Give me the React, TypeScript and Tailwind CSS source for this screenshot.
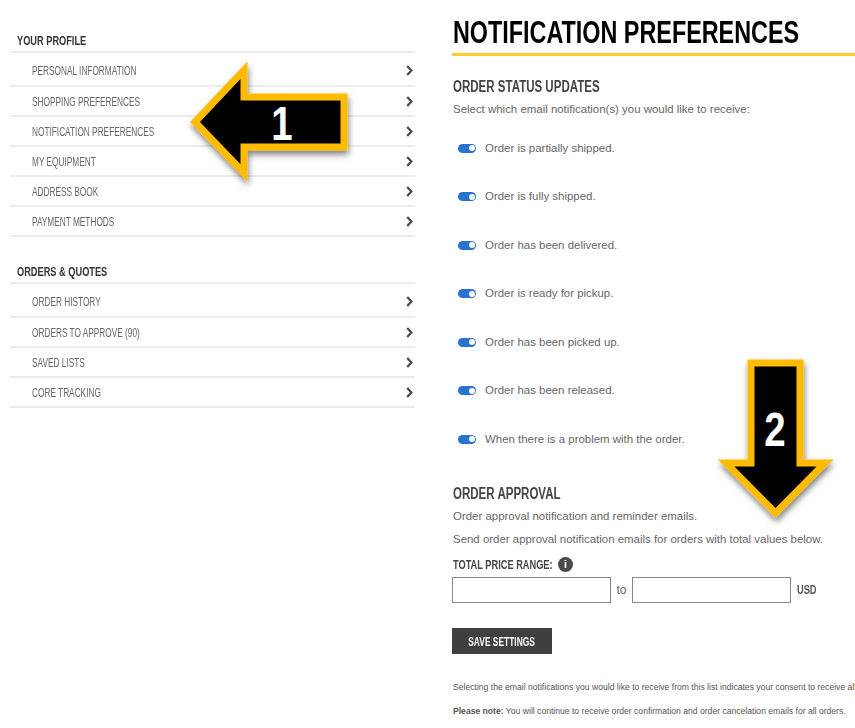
const profileLinks = [
  "PERSONAL INFORMATION",
  "SHOPPING PREFERENCES",
  "NOTIFICATION PREFERENCES",
  "MY EQUIPMENT",
  "ADDRESS BOOK",
  "PAYMENT METHODS",
];

const orderLinks = ["ORDER HISTORY", "ORDERS TO APPROVE (90)", "SAVED LISTS", "CORE TRACKING"];

const statusOptions = [
  "Order is partially shipped.",
  "Order is fully shipped.",
  "Order has been delivered.",
  "Order is ready for pickup.",
  "Order has been picked up.",
  "Order has been released.",
  "When there is a problem with the order.",
];

function Chevron() {
  return (
    <svg width="7" height="11" viewBox="0 0 7 11" fill="none" className="mr-[1px]">
      <path d="M1.2 1 L5.4 5.5 L1.2 10" stroke="#4a4a4a" strokeWidth="2.2" />
    </svg>
  );
}

function NavSection({ title, links }: { title: string; links: string[] }) {
  return (
    <section>
      <h2 className="h-[24px] pl-[7px] text-[13px] font-bold leading-[27px] text-[#333]">
        <span className="inline-block origin-left scale-x-[0.71] whitespace-nowrap">{title}</span>
      </h2>
      <ul className="border-t-2 border-[#ececec]">
        {links.map((link, i) => (
          <li
            key={link}
            className={`flex items-center justify-between border-b-2 border-[#ececec] pl-[22px] pr-[1px] ${
              i === 0 ? "h-[34px] pt-[3px]" : "h-[30px] pt-[1px]"
            }`}
          >
            <span className="inline-block origin-left scale-x-[0.69] whitespace-nowrap text-[12px] text-[#666]">
              {link}
            </span>
            <Chevron />
          </li>
        ))}
      </ul>
    </section>
  );
}

function Toggle() {
  return (
    <span className="flex h-[9px] w-[18px] items-center justify-end rounded-full bg-[#2872d0] pr-[1.5px]">
      <span className="h-[6px] w-[6px] rounded-full bg-white" />
    </span>
  );
}

function LeftArrow() {
  return (
    <svg className="absolute left-[180px] top-[52px]" width="180" height="140" viewBox="180 52 180 140">
      <defs>
        <filter id="shadow-left" x="-20%" y="-20%" width="140%" height="140%">
          <feDropShadow dx="1" dy="4" stdDeviation="3" floodColor="#000" floodOpacity="0.5" />
        </filter>
      </defs>
      <path
        d="M195 122 L244 70 L244 97 L344 97 L344 147 L244 147 L244 173 Z"
        fill="#000"
        stroke="#ffbb00"
        strokeWidth="7"
        strokeLinejoin="miter"
        filter="url(#shadow-left)"
      />
      <text
        transform="translate(282 140) scale(0.8 1)"
        textAnchor="middle"
        fontFamily="Liberation Sans, sans-serif"
        fontWeight="700"
        fontSize="48"
        fill="#fff"
      >
        1
      </text>
    </svg>
  );
}

function DownArrow() {
  return (
    <svg className="absolute left-[705px] top-[350px]" width="145" height="185" viewBox="705 350 145 185">
      <defs>
        <filter id="shadow-down" x="-20%" y="-20%" width="140%" height="140%">
          <feDropShadow dx="1" dy="4" stdDeviation="3" floodColor="#000" floodOpacity="0.5" />
        </filter>
      </defs>
      <path
        d="M751 363 L800 363 L800 463 L825 463 L775.5 513 L726 463 L751 463 Z"
        fill="#000"
        stroke="#ffbb00"
        strokeWidth="7"
        strokeLinejoin="miter"
        filter="url(#shadow-down)"
      />
      <text
        transform="translate(775 446) scale(0.8 1)"
        textAnchor="middle"
        fontFamily="Liberation Sans, sans-serif"
        fontWeight="700"
        fontSize="48"
        fill="#fff"
      >
        2
      </text>
    </svg>
  );
}

export default function App() {
  return (
    <div className="relative flex h-[728px] w-[855px] overflow-hidden bg-white font-['Liberation_Sans',sans-serif]">
      <aside className="ml-[10px] flex w-[405px] flex-col gap-[21px] pt-[27px]">
        <NavSection title="YOUR PROFILE" links={profileLinks} />
        <NavSection title="ORDERS & QUOTES" links={orderLinks} />
      </aside>

      <main className="ml-[37px] w-[403px] min-w-0">
        <h1 className="mt-[13px] h-[38px] pl-[1px] text-[32px] font-bold leading-[38px] text-black">
          <span className="inline-block origin-left scale-x-[0.73] whitespace-nowrap">NOTIFICATION PREFERENCES</span>
        </h1>
        <div className="mt-[2px] h-[3px] bg-[#ffcb2e]" />

        <h2 className="mt-[21px] pl-[1px] text-[16px] font-bold leading-[20px] text-[#444]">
          <span className="inline-block origin-left scale-x-[0.72] whitespace-nowrap">ORDER STATUS UPDATES</span>
        </h2>
        <p className="mt-[4px] pl-[1px] text-[11.45px] leading-[16px] text-[#666]">
          Select which email notification(s) you would like to receive:
        </p>

        <ul className="mt-[7px]">
          {statusOptions.map((option) => (
            <li key={option} className="flex h-[48.5px] items-center gap-[9px] pl-[6px]">
              <Toggle />
              <span className="text-[11.45px] text-[#666]">{option}</span>
            </li>
          ))}
        </ul>

        <h2 className="mt-[20px] pl-[1px] text-[16px] font-bold leading-[20px] text-[#444]">
          <span className="inline-block origin-left scale-x-[0.72] whitespace-nowrap">ORDER APPROVAL</span>
        </h2>
        <p className="mt-[2px] pl-[1px] text-[11.45px] leading-[20px] text-[#666]">
          Order approval notification and reminder emails.
        </p>
        <p className="mt-[3px] pl-[1px] text-[11.45px] leading-[20px] text-[#666]">
          Send order approval notification emails for orders with total values below.
        </p>

        <div className="mt-[7px] flex h-[18px] items-center gap-[6px] pl-[1px]">
          <span className="w-[99px] whitespace-nowrap text-[12px] font-bold text-[#444]">
            <span className="inline-block origin-left scale-x-[0.77]">TOTAL PRICE RANGE:</span>
          </span>
          <span className="flex h-[15px] w-[15px] items-center justify-center rounded-full bg-[#4a4a4a] text-[10px] font-bold text-white">
            i
          </span>
        </div>

        <div className="mt-[3px] flex items-center">
          <input className="h-[26px] w-[159px] border border-[#888] bg-white" />
          <span className="w-[21px] text-center text-[12px] text-[#666]">to</span>
          <input className="h-[26px] w-[159px] border border-[#888] bg-white" />
          <span className="ml-[6px] inline-block origin-left scale-x-[0.77] text-[12px] font-bold text-[#555]">USD</span>
        </div>

        <button className="mt-[25px] block h-[26px] w-[100px] bg-[#3f3f3f] pt-[2px] text-center text-[12px] font-bold text-white">
          <span className="inline-block scale-x-[0.7] whitespace-nowrap">SAVE SETTINGS</span>
        </button>

        <p className="mt-[27px] whitespace-nowrap pl-[1px] text-[8.6px] leading-[12px] text-[#555]">
          Selecting the email notifications you would like to receive from this list indicates your consent to receive all
        </p>
        <p className="mt-[12px] whitespace-nowrap pl-[1px] text-[8.6px] leading-[12px] text-[#555]">
          <b>Please note:</b> You will continue to receive order confirmation and order cancelation emails for all orders.
        </p>
      </main>

      <LeftArrow />
      <DownArrow />
    </div>
  );
}
